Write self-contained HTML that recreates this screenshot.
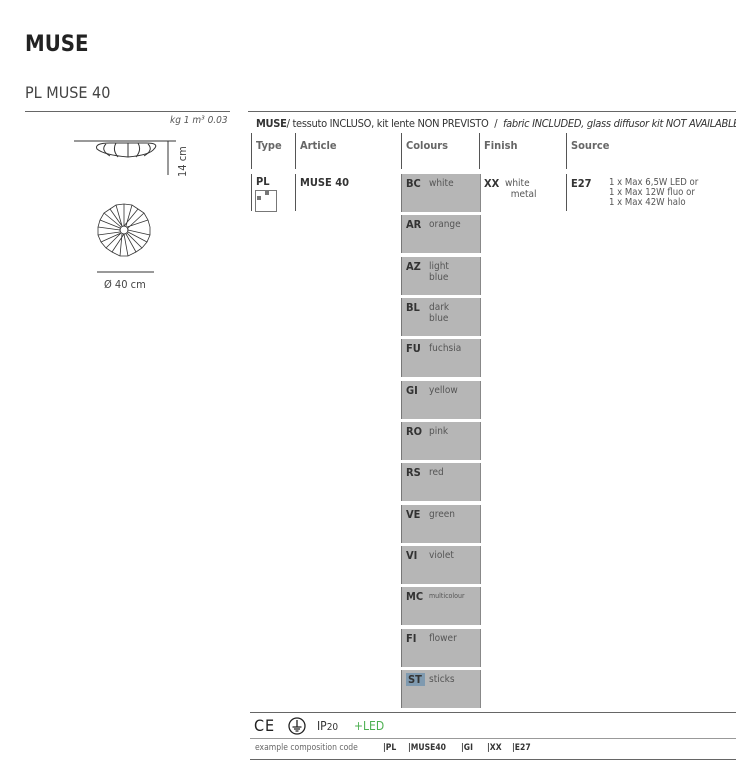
<!DOCTYPE html>
<html><head><meta charset="utf-8"><style>
body{margin:0;width:736px;height:772px;background:#fff;position:relative;overflow:hidden;font-family:"DejaVu Sans Condensed","Liberation Sans",sans-serif;color:#333}
.a{position:absolute;white-space:nowrap}
.hl{position:absolute;height:1px;background:#666}
.vl{position:absolute;width:1px;background:#555}
.box{position:absolute;left:401px;width:78px;height:38px;background:#b6b6b6;border-left:1px solid #777;border-right:1px solid #888;font-size:10px;color:#555}
.box b{color:#333;font-size:11px;margin:0 4px 0 4px;position:relative;top:3px;display:inline-block;width:19px;vertical-align:top}
.box span{position:relative;top:3px;display:inline-block;vertical-align:top;line-height:11px;padding-top:1px}
.h{font-size:11px;font-weight:bold;color:#666}
</style></head><body>
<div class="a" style="left:25px;top:32px;font-size:22px;font-weight:bold;color:#222">MUSE</div>
<div class="a" style="left:25px;top:83px;font-size:16px;color:#444">PL MUSE 40</div>
<div class="hl" style="left:25px;top:111px;width:205px"></div>
<div class="a" style="left:170px;top:115px;font-size:10px;font-style:italic;color:#555">kg 1 m³ 0.03</div>
<svg class="a" style="left:70px;top:135px" width="120" height="160">
<g stroke="#333" fill="none" stroke-width="1">
<line x1="4" y1="6" x2="106" y2="6"/><line x1="98" y1="6" x2="98" y2="40"/>
<path d="M27 14 Q24 8 40 8 L76 8 Q90 8 84 14 Q80 20 58 22 Q34 20 27 14Z"/>
<path d="M36 9 Q30 15 40 21 M46 8 Q42 15 48 22 M58 8 V22 M68 8 Q72 15 66 22 M78 9 Q84 15 74 21"/>
<circle cx="54" cy="95" r="4"/>
<line x1="27" y1="137" x2="84" y2="137"/>
</g>
<g stroke="#333" fill="none" stroke-width="0.8" transform="translate(54,95)">
<path d="M0-26 L8-25 L14-21 L20-17 L24-10 L26-3 L26 5 L23 12 L18 18 L12 22 L4 26 L-4 26 L-12 22 L-18 18 L-23 12 L-26 5 L-26-3 L-24-10 L-20-17 L-14-21 L-8-25Z"/>
<path d="M0-4 L0-26 M0-4 L14-21 M3-3 L24-10 M4 0 L26 5 M3 3 L18 18 M0 4 L4 26 M0 4 L-12 22 M-3 3 L-23 12 M-4 0 L-26-3 M-3-3 L-20-17 M-2-4 L-8-25 M2-4 L8-25 M4-2 L20-17 M4 2 L23 12 M2 4 L12 22 M-2 4 L-4 26 M-3 3 L-18 18 M-4 2 L-26 5 M-4-2 L-24-10 M-2-4 L-14-21"/>
</g>
</svg>
<div class="a" style="font-size:11px;color:#444;transform:rotate(-90deg);transform-origin:left top;top:177px;left:176px">14 cm</div>
<div class="a" style="left:104px;top:278px;font-size:11px;color:#444">Ø 40 cm</div>

<div class="hl" style="left:248px;top:111px;width:488px"></div>
<div class="a" style="left:256px;top:117px;font-size:11px;color:#333;letter-spacing:-0.3px"><b>MUSE</b>/ tessuto INCLUSO, kit lente NON PREVISTO &nbsp;/ &nbsp;<i>fabric INCLUDED, glass diffusor kit NOT AVAILABLE</i></div>
<div class="vl" style="left:251px;top:133px;height:36px"></div>
<div class="vl" style="left:295px;top:133px;height:36px"></div>
<div class="vl" style="left:401px;top:133px;height:36px"></div>
<div class="vl" style="left:479px;top:133px;height:36px"></div>
<div class="vl" style="left:566px;top:133px;height:36px"></div>
<div class="vl" style="left:251px;top:174px;height:37px"></div>
<div class="vl" style="left:295px;top:174px;height:37px"></div>
<div class="vl" style="left:566px;top:174px;height:37px"></div>
<div class="a h" style="left:256px;top:139px">Type</div>
<div class="a h" style="left:300px;top:139px">Article</div>
<div class="a h" style="left:406px;top:139px">Colours</div>
<div class="a h" style="left:484px;top:139px">Finish</div>
<div class="a h" style="left:571px;top:139px">Source</div>
<div class="a" style="left:256px;top:175px;font-size:11px;font-weight:bold">PL</div>
<div class="a" style="left:255px;top:190px;width:20px;height:20px;border:1px solid #777"></div>
<div class="a" style="left:257px;top:196px;width:4px;height:4px;background:#777"></div>
<div class="a" style="left:265px;top:191px;width:4px;height:4px;background:#777"></div>
<div class="a" style="left:300px;top:176px;font-size:11px;font-weight:bold">MUSE 40</div>
<div class="a" style="left:484px;top:177px;font-size:11px;font-weight:bold">XX</div>
<div class="a" style="left:505px;top:178px;font-size:10px;color:#555;line-height:11px">white<br>&nbsp;&nbsp;metal</div>
<div class="a" style="left:571px;top:177px;font-size:11px;font-weight:bold">E27</div>
<div class="a" style="left:609px;top:178px;font-size:9.5px;color:#555;line-height:10px">1 x Max 6,5W LED or<br>1 x Max 12W fluo or<br>1 x Max 42W halo</div>

<div class="box" style="top:174px"><b>BC</b><span>white</span></div>
<div class="box" style="top:215px"><b>AR</b><span>orange</span></div>
<div class="box" style="top:257px"><b>AZ</b><span>light<br>blue</span></div>
<div class="box" style="top:298px"><b>BL</b><span>dark<br>blue</span></div>
<div class="box" style="top:339px"><b>FU</b><span>fuchsia</span></div>
<div class="box" style="top:381px"><b>GI</b><span>yellow</span></div>
<div class="box" style="top:422px"><b>RO</b><span>pink</span></div>
<div class="box" style="top:463px"><b>RS</b><span>red</span></div>
<div class="box" style="top:505px"><b>VE</b><span>green</span></div>
<div class="box" style="top:546px"><b>VI</b><span>violet</span></div>
<div class="box" style="top:587px"><b>MC</b><span style="font-size:7px">multicolour</span></div>
<div class="box" style="top:629px"><b>FI</b><span>flower</span></div>
<div class="box" style="top:670px"><b style="background:#7f9ab0;width:17px;padding-left:2px">ST</b><span>sticks</span></div>

<div class="hl" style="left:250px;top:712px;width:486px"></div>
<div class="a" style="left:254px;top:716px;font-size:16px;color:#222;letter-spacing:1px">CE</div>
<svg class="a" style="left:288px;top:717px" width="18" height="18"><circle cx="9" cy="9" r="8" fill="none" stroke="#222" stroke-width="1.3"/><path d="M9 3 V10 M4.5 10 H13.5 M6 12 H12 M7.5 14 H10.5" stroke="#222" stroke-width="1.3"/></svg>
<div class="a" style="left:317px;top:719px;font-size:12px;color:#333">IP<span style="font-size:10px">20</span></div>
<div class="a" style="left:354px;top:719px;font-size:12px;color:#4caf50">+LED</div>
<div class="hl" style="left:250px;top:738px;width:486px;background:#999"></div>
<div class="a" style="left:255px;top:743px;font-size:8.5px;color:#666">example composition code</div>
<div class="a" style="left:383px;top:743px;font-size:8.5px;font-weight:bold;color:#333">|PL</div>
<div class="a" style="left:408px;top:743px;font-size:8.5px;font-weight:bold;color:#333">|MUSE40</div>
<div class="a" style="left:461px;top:743px;font-size:8.5px;font-weight:bold;color:#333">|GI</div>
<div class="a" style="left:487px;top:743px;font-size:8.5px;font-weight:bold;color:#333">|XX</div>
<div class="a" style="left:512px;top:743px;font-size:8.5px;font-weight:bold;color:#333">|E27</div>
<div class="hl" style="left:250px;top:759px;width:486px"></div>
</body></html>
